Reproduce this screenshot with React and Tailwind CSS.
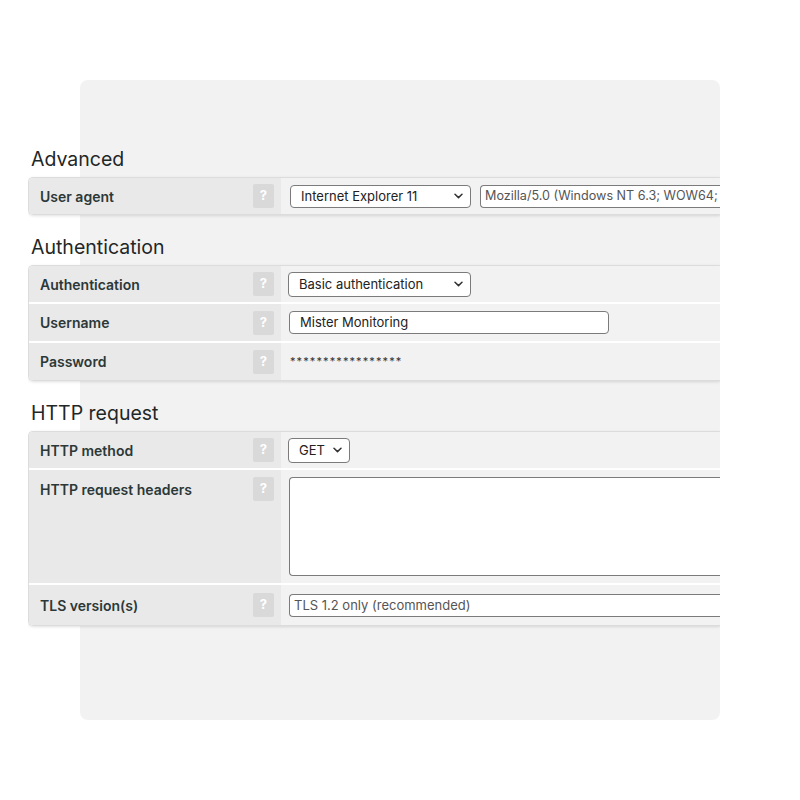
const font = { fontFamily: "Inter, 'Liberation Sans', sans-serif" };

function Help() {
    return (
        <div className="w-[21px] h-[24px] rounded-[2px] bg-[#d9d9d9] text-white text-[13px] font-bold flex items-center justify-center shrink-0">
            ?
        </div>
    );
}

function Chevron() {
    return (
        <svg width="9" height="6" viewBox="0 0 9 6" className="shrink-0">
            <path d="M1 1.2 L4.5 4.6 L8 1.2" fill="none" stroke="#333" strokeWidth="1.5" strokeLinecap="round" strokeLinejoin="round" />
        </svg>
    );
}

function Select({ text, width, tall }) {
    return (
        <div
            className={`flex items-center justify-between bg-white border border-[#7b7b7b] rounded-[4px] pl-[10px] pr-[7px] text-[13px] text-[#222] ${tall ? "h-[25px]" : "h-[23px]"}`}
            style={{ width }}
        >
            <span className="pt-[1px]">{text}</span>
            <Chevron />
        </div>
    );
}

function Row({ label, children, height = "h-[36px]", top = false }) {
    return (
        <div className={`flex ${height}`}>
            <div className={`w-[252px] shrink-0 bg-[#e9e9e9] flex pl-[11px] pr-[7px] justify-between ${top ? "items-start pt-[7px]" : "items-center"}`}>
                <span className={`text-[14px] font-semibold text-[#2c3838] ${top ? "mt-[2px]" : ""}`}>{label}</span>
                <Help />
            </div>
            <div className={`flex-1 bg-[#f2f2f2] flex gap-[9px] pl-[9px] ${top ? "items-start pt-[7px]" : "items-center"}`}>
                {children}
            </div>
        </div>
    );
}

function Sep() {
    return <div className="h-[2px] bg-white" />;
}

function Card({ children }) {
    return (
        <div className="border border-[#dcdcdc] border-r-0 rounded-l-[5px] overflow-hidden shadow-[0_1px_3px_rgba(0,0,0,0.12)]">
            {children}
        </div>
    );
}

function Heading({ children, first }) {
    return (
        <h2 className={`text-[19.5px] leading-[24px] text-[#1f2727] pl-[3px] mb-[6px] ${first ? "" : "mt-[20px]"}`}>
            {children}
        </h2>
    );
}

export default function App() {
    return (
        <div className="w-[800px] h-[800px] bg-white pt-[80px]" style={font}>
            <div className="relative ml-[28px] w-[692px] h-[640px] overflow-hidden">
                <div className="absolute left-[52px] top-0 w-[640px] h-[640px] bg-[#f2f2f2] rounded-[8px]" />
                <div className="relative pt-[67px]">
                    <Heading first>Advanced</Heading>
                    <Card>
                        <Row label="User agent">
                            <Select text="Internet Explorer 11" width="181px" />
                            <div className="flex-1 h-[23px] bg-white border border-[#7b7b7b] border-r-0 rounded-l-[4px] pl-[4px] pt-[1px] flex items-center text-[12.6px] text-[#555] whitespace-nowrap overflow-hidden">
                                Mozilla/5.0 (Windows NT 6.3; WOW64;
                            </div>
                        </Row>
                    </Card>

                    <Heading>Authentication</Heading>
                    <Card>
                        <Row label="Authentication">
                            <div className="-ml-[2px]">
                                <Select text="Basic authentication" width="183px" tall />
                            </div>
                        </Row>
                        <Sep />
                        <Row label="Username" height="h-[37px]">
                            <div className="-ml-[1px] w-[320px] h-[23px] bg-white border border-[#7b7b7b] rounded-[4px] pl-[10px] pt-[1px] flex items-center text-[13px] text-[#222]">
                                Mister Monitoring
                            </div>
                        </Row>
                        <Sep />
                        <Row label="Password" height="h-[37px]">
                            <span className="text-[11px] tracking-[1.1px] text-[#333]">*****************</span>
                        </Row>
                    </Card>

                    <Heading>HTTP request</Heading>
                    <Card>
                        <Row label="HTTP method">
                            <div className="-ml-[2px]">
                                <Select text="GET" width="62px" tall />
                            </div>
                        </Row>
                        <Sep />
                        <Row label="HTTP request headers" height="h-[113px]" top>
                            <div className="-ml-[1px] flex-1 h-[99px] bg-white border border-[#7b7b7b] border-r-0 rounded-l-[4px]" />
                        </Row>
                        <Sep />
                        <Row label="TLS version(s)" height="h-[40px]">
                            <div className="-ml-[1px] flex-1 h-[23px] bg-white border border-[#7b7b7b] border-r-0 rounded-l-[4px] pl-[4px] pt-[1px] flex items-center text-[13px] text-[#555]">
                                TLS 1.2 only (recommended)
                            </div>
                        </Row>
                    </Card>
                </div>
            </div>
        </div>
    );
}
